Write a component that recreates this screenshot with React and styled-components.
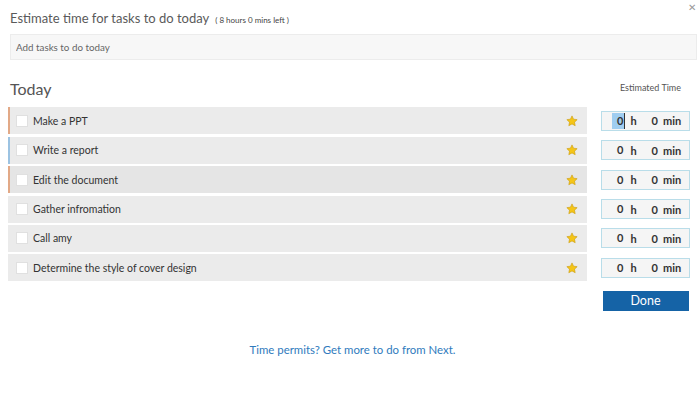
import React from "react";
import styled, { createGlobalStyle } from "styled-components";

const tasks = [
	{ name: "Make a PPT", mark: "#e2a987", shade: "#ebebeb", selected: true },
	{ name: "Write a report", mark: "#9cc3e2", shade: "#ebebeb" },
	{ name: "Edit the document", mark: "#e2a987", shade: "#e5e5e5" },
	{ name: "Gather infromation", mark: null, shade: "#ebebeb" },
	{ name: "Call amy", mark: null, shade: "#ebebeb" },
	{ name: "Determine the style of cover design", mark: null, shade: "#ebebeb" },
];

const Star = () => (
	<svg width="12" height="12" viewBox="0 0 24 24">
		<path
			d="M12 1.8l3.1 6.6 7.2.9-5.3 5 1.4 7.1L12 17.9l-6.4 3.5 1.4-7.1-5.3-5 7.2-.9z"
			fill="#f5c518"
			stroke="#c99a0a"
			strokeWidth="1.2"
			strokeLinejoin="round"
		/>
	</svg>
);

const App = () => {
	return (
		<>
			<GlobalStyle />
			<Page>
				<Header>
					<Title>
						Estimate time for tasks to do today
						<Remaining>( 8 hours 0 mins left )</Remaining>
					</Title>
					<Close>✕</Close>
				</Header>
				<AddInput placeholder="Add tasks to do today" />
				<Board>
					<Heading>Today</Heading>
					<ColumnLabel>Estimated Time</ColumnLabel>
					{tasks.map((t) => (
						<React.Fragment key={t.name}>
							<Row mark={t.mark} shade={t.shade}>
								<Check />
								<TaskName>{t.name}</TaskName>
								<Star />
							</Row>
							<TimeCell>
								<TimeBox>
									<Hours selected={t.selected}>0</Hours>
									<HourUnit>h</HourUnit>
									<Minutes>0</Minutes>
									<span>min</span>
								</TimeBox>
							</TimeCell>
						</React.Fragment>
					))}
					<span />
					<DoneWrap>
						<DoneButton>Done</DoneButton>
					</DoneWrap>
				</Board>
				<More>Time permits? Get more to do from Next.</More>
			</Page>
		</>
	);
};

const GlobalStyle = createGlobalStyle`
	body {
		margin: 0;
		background: #fff;
		font-family: Lato, "Open Sans", "Liberation Sans", sans-serif;
	}
`;

const Page = styled.div`
	width: 700px;
	height: 412px;
	box-sizing: border-box;
	padding: 0 3px 0 8px;
`;

const Header = styled.div`
	display: flex;
	justify-content: space-between;
	align-items: flex-start;
	height: 34px;
	padding-left: 2px;
`;

const Title = styled.div`
	margin-top: 10px;
	font-size: 13px;
	color: #5a5a5a;
	display: flex;
	align-items: baseline;
`;

const Remaining = styled.span`
	font-size: 8px;
	color: #444;
	margin-left: 6px;
`;

const Close = styled.div`
	font-size: 10px;
	color: #999;
	margin-top: 1px;
	margin-right: 1px;
`;

const AddInput = styled.input`
	display: block;
	box-sizing: border-box;
	width: 687px;
	height: 26px;
	margin-left: 2px;
	padding: 0 5px;
	border: 1px solid #ececec;
	background: #f7f7f7;
	font-family: inherit;
	font-size: 9.8px;
	outline: none;
	&::placeholder {
		color: #666;
	}
`;

const Board = styled.div`
	display: grid;
	grid-template-columns: 579px 89px;
	column-gap: 14px;
	row-gap: 2.4px;
	margin-top: 20px;
`;

const Heading = styled.div`
	font-size: 16px;
	color: #555;
	padding-left: 2px;
	height: 24px;
	margin-top: -1px;
	margin-bottom: 2px;
`;

const ColumnLabel = styled.div`
	font-size: 9px;
	color: #555;
	text-align: center;
	padding-left: 10px;
	padding-top: 2px;
`;

const Row = styled.div`
	display: flex;
	align-items: center;
	height: 27px;
	box-sizing: border-box;
	background: ${(p) => p.shade};
	border-left: 2px solid ${(p) => p.mark || p.shade};
	padding: 0 9px 0 6px;
`;

const Check = styled.span`
	width: 10px;
	height: 10px;
	background: #fff;
	border: 1px solid #e0e0e0;
	margin-right: 5px;
	flex-shrink: 0;
`;

const TaskName = styled.span`
	flex: 1;
	font-size: 10.5px;
	color: #333;
`;

const TimeCell = styled.div`
	display: flex;
	align-items: center;
`;

const TimeBox = styled.div`
	box-sizing: border-box;
	width: 89px;
	height: 20px;
	border: 1px solid #b9dde9;
	background: #f5f5f5;
	display: flex;
	align-items: center;
	padding-left: 15px;
	font-size: 11px;
	font-weight: bold;
	color: #333;
`;

const Hours = styled.span`
	line-height: 16px;
	padding: ${(p) => (p.selected ? "0 1px 0 5px" : "0")};
	margin-left: ${(p) => (p.selected ? "-5px" : "0")};
	background: ${(p) => (p.selected ? "#9fcdf0" : "transparent")};
	border-right: ${(p) => (p.selected ? "1px solid #333" : "1px solid transparent")};
	margin-right: ${(p) => (p.selected ? "5px" : "6px")};
`;

const HourUnit = styled.span`
	margin-right: 15px;
`;

const Minutes = styled.span`
	margin-right: 5px;
`;

const DoneWrap = styled.div`
	padding-top: 7px;
	display: flex;
	justify-content: center;
`;

const DoneButton = styled.button`
	width: 86px;
	height: 20px;
	border: none;
	background: #1563a6;
	color: #fff;
	font-family: inherit;
	font-size: 12.5px;
	padding: 0;
`;

const More = styled.div`
	text-align: center;
	margin-top: 32px;
	font-size: 11.4px;
	color: #2f7bbd;
`;

export default App;
